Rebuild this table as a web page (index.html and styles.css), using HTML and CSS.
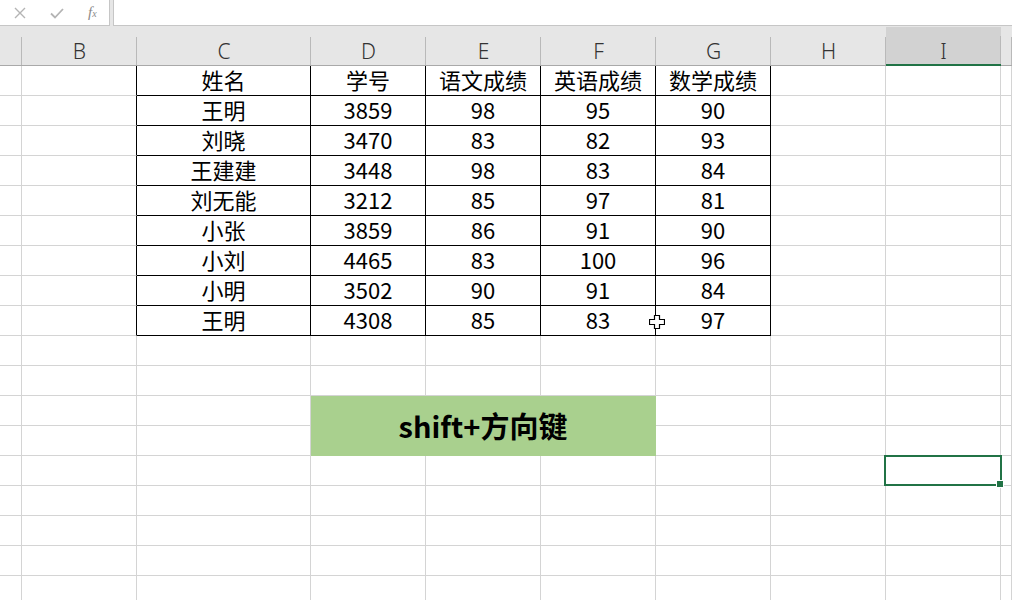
FILE: index.html
```html
<!DOCTYPE html>
<html lang="zh">
<head>
<meta charset="utf-8">
<link rel="stylesheet" href="styles.css">
</head>
<body>
<div class="app">
  <div class="fbar">
    <div class="fbtns">
      <svg class="ico" width="14" height="14" viewBox="0 0 14 14"><path d="M2 2L12 12M12 2L2 12" stroke="#b4b4b4" stroke-width="1.4" fill="none"/></svg>
      <svg class="ico" width="16" height="14" viewBox="0 0 16 14"><path d="M2 7.5L6 11.5L14 3" stroke="#b4b4b4" stroke-width="1.8" fill="none"/></svg>
      <span class="fx">f<sub>x</sub></span>
    </div>
    <div class="finput"></div>
  </div>
  <table class="sheet">
    <colgroup>
      <col class="c-a"><col class="c-b"><col class="c-c"><col class="c-n"><col class="c-n"><col class="c-n"><col class="c-n"><col class="c-n"><col class="c-n"><col class="c-z">
    </colgroup>
    <thead>
      <tr class="hdr">
        <th></th><th>B</th><th>C</th><th>D</th><th>E</th><th>F</th><th>G</th><th>H</th><th class="hsel">I</th><th></th>
      </tr>
    </thead>
    <tbody>
      <tr><td></td><td class="tl"></td><td class="t">姓名</td><td class="t">学号</td><td class="t">语文成绩</td><td class="t">英语成绩</td><td class="t">数学成绩</td><td></td><td></td><td></td></tr>
      <tr><td></td><td class="tl"></td><td class="t">王明</td><td class="t">3859</td><td class="t">98</td><td class="t">95</td><td class="t">90</td><td></td><td></td><td></td></tr>
      <tr><td></td><td class="tl"></td><td class="t">刘晓</td><td class="t">3470</td><td class="t">83</td><td class="t">82</td><td class="t">93</td><td></td><td></td><td></td></tr>
      <tr><td></td><td class="tl"></td><td class="t">王建建</td><td class="t">3448</td><td class="t">98</td><td class="t">83</td><td class="t">84</td><td></td><td></td><td></td></tr>
      <tr><td></td><td class="tl"></td><td class="t">刘无能</td><td class="t">3212</td><td class="t">85</td><td class="t">97</td><td class="t">81</td><td></td><td></td><td></td></tr>
      <tr><td></td><td class="tl"></td><td class="t">小张</td><td class="t">3859</td><td class="t">86</td><td class="t">91</td><td class="t">90</td><td></td><td></td><td></td></tr>
      <tr><td></td><td class="tl"></td><td class="t">小刘</td><td class="t">4465</td><td class="t">83</td><td class="t">100</td><td class="t">96</td><td></td><td></td><td></td></tr>
      <tr><td></td><td class="tl"></td><td class="t">小明</td><td class="t">3502</td><td class="t">90</td><td class="t">91</td><td class="t">84</td><td></td><td></td><td></td></tr>
      <tr><td></td><td class="tl"></td><td class="t">王明</td><td class="t">4308</td><td class="t">85</td><td class="t cur">83</td><td class="t">97</td><td></td><td></td><td></td></tr>
      <tr><td></td><td></td><td></td><td></td><td></td><td></td><td></td><td></td><td></td><td></td></tr>
      <tr><td></td><td></td><td></td><td></td><td></td><td></td><td></td><td></td><td></td><td></td></tr>
      <tr><td></td><td></td><td></td><td class="merged" colspan="3" rowspan="2">shift+方向键</td><td></td><td></td><td></td><td></td></tr>
      <tr><td></td><td></td><td></td><td></td><td></td><td></td><td></td></tr>
      <tr><td></td><td></td><td></td><td></td><td></td><td></td><td></td><td></td><td class="sel"></td><td></td></tr>
      <tr><td></td><td></td><td></td><td></td><td></td><td></td><td></td><td></td><td></td><td></td></tr>
      <tr><td></td><td></td><td></td><td></td><td></td><td></td><td></td><td></td><td></td><td></td></tr>
      <tr><td></td><td></td><td></td><td></td><td></td><td></td><td></td><td></td><td></td><td></td></tr>
      <tr><td></td><td></td><td></td><td></td><td></td><td></td><td></td><td></td><td></td><td></td></tr>
    </tbody>
  </table>
</div>
</body>
</html>
```
FILE: styles.css
```css
html, body {
  margin: 0;
  padding: 0;
  background: #ffffff;
}
.app {
  width: 1012px;
  height: 600px;
  overflow: hidden;
  background: #e6e6e6;
  font-family: "Noto Sans CJK SC", "Noto Sans", sans-serif;
}
.fbar {
  display: flex;
  height: 27px;
  gap: 3px;
}
.fbtns {
  width: 110px;
  height: 26px;
  box-sizing: border-box;
  background: #ffffff;
  border-right: 1px solid #c6c6c6;
  border-bottom: 1px solid #c6c6c6;
  display: flex;
  align-items: center;
  padding-left: 13px;
  gap: 22px;
}
.fx {
  font-family: "Liberation Serif", serif;
  font-style: italic;
  font-size: 15px;
  color: #8a8a8a;
  margin-left: 1px;
}
.fx sub {
  font-size: 10px;
  vertical-align: baseline;
}
.finput {
  flex: 1;
  height: 26px;
  box-sizing: border-box;
  background: #ffffff;
  border-left: 1px solid #c6c6c6;
  border-bottom: 1px solid #c6c6c6;
}
.sheet {
  table-layout: fixed;
  border-collapse: separate;
  border-spacing: 0;
  width: 1012px;
  background: #ffffff;
}
.c-a { width: 22px; }
.c-b { width: 115px; }
.c-c { width: 174px; }
.c-n { width: 115px; }
.c-z { width: 11px; }
.sheet th, .sheet td {
  box-sizing: border-box;
  padding: 0;
  text-align: center;
  white-space: nowrap;
}
.hdr th {
  height: 39px;
  background: #e6e6e6 linear-gradient(#b9b9b9, #b9b9b9) right bottom / 1px 28px no-repeat;
  border-bottom: 1px solid #a9a9a9;
  font-weight: 300;
  font-size: 21px;
  color: #333333;
  padding-top: 10px;
  line-height: 27px;
  font-family: "Noto Sans", "Liberation Sans", sans-serif;
}
.hdr th.hsel {
  background: #d2d2d2 linear-gradient(#b9b9b9, #b9b9b9) right bottom / 1px 28px no-repeat;
  border-bottom: 2px solid #217346;
  line-height: 26px;
}
.sheet td {
  height: 30px;
  padding-bottom: 2px;
  border-right: 1px solid #d4d4d4;
  border-bottom: 1px solid #d4d4d4;
  font-size: 22px;
  line-height: 27px;
  color: #000000;
}
.sheet td.t {
  border-right-color: #000000;
  border-bottom-color: #000000;
}
.sheet td.tl {
  border-right-color: #000000;
}
.sheet td.merged {
  background: #a9d08e;
  border-right: 1px solid #a9d08e;
  border-bottom: 1px solid #a9d08e;
  font-weight: 700;
  font-size: 29px;
  line-height: 36px;
  color: #000000;
}
.sheet td.sel {
  position: relative;
}
.sheet td.sel::before {
  content: "";
  position: absolute;
  left: -2px;
  top: -1px;
  right: -2px;
  bottom: -1px;
  border: 2px solid #217346;
}
.sheet td.sel::after {
  content: "";
  position: absolute;
  right: -4px;
  bottom: -3px;
  width: 6px;
  height: 6px;
  background: #217346;
  border: 1px solid #ffffff;
}
.sheet td.cur {
  position: relative;
}
.sheet td.cur::after {
  content: "";
  position: absolute;
  right: -10px;
  top: 9px;
  width: 16px;
  height: 14px;
  background: url("data:image/svg+xml;utf8,<svg xmlns='http://www.w3.org/2000/svg' width='16' height='14' viewBox='0 0 16 14'><path d='M5.5 0.5H10.5V4.5H15.5V9.5H10.5V13.5H5.5V9.5H0.5V4.5H5.5Z' fill='white' stroke='black' stroke-width='1.2'/></svg>") no-repeat;
}
```
